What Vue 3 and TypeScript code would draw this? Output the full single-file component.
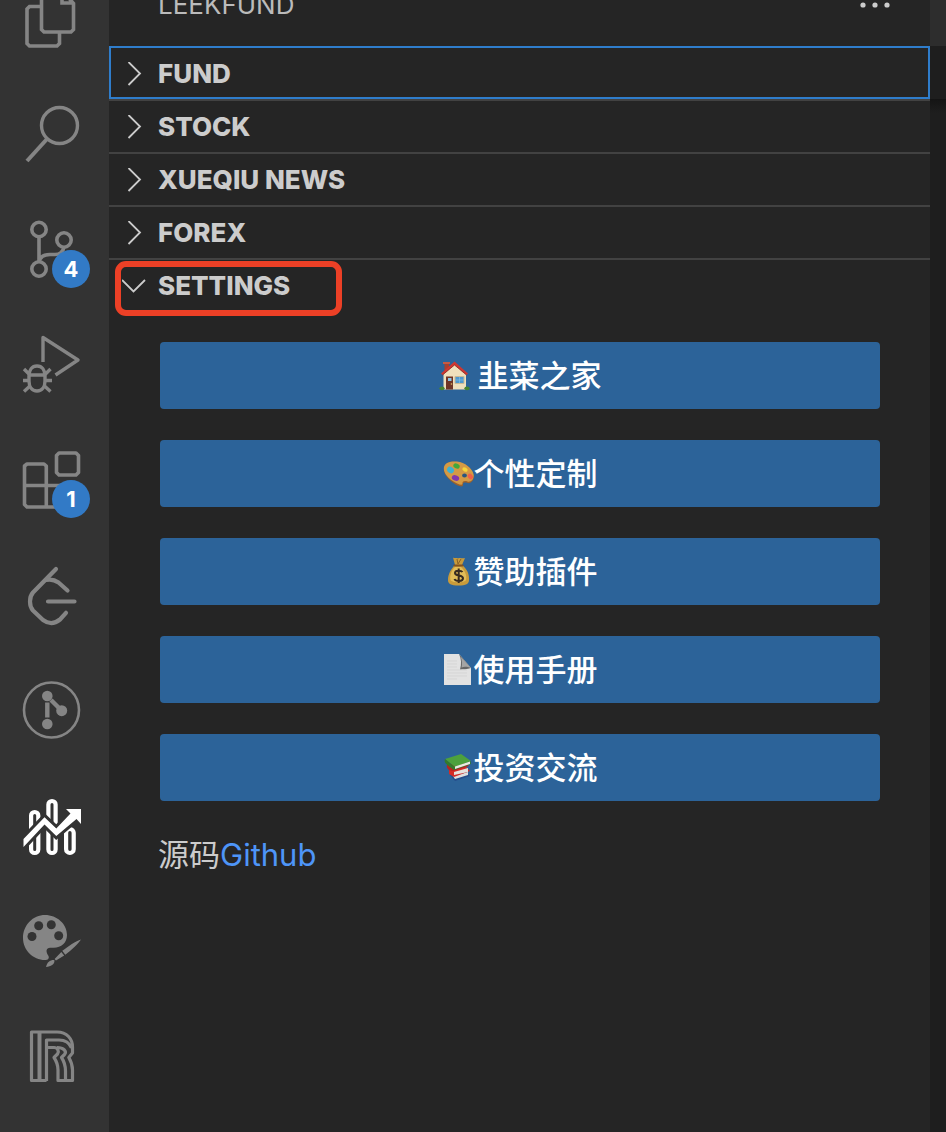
<script setup lang="ts">
import { ref } from 'vue'

interface Section {
  id: string
  title: string
  open: boolean
}

interface Action {
  icon: 'house' | 'palette' | 'money' | 'page' | 'books'
  label: string
  spaced?: boolean
}

const sections = ref<Section[]>([
  { id: 'fund', title: 'FUND', open: false },
  { id: 'stock', title: 'STOCK', open: false },
  { id: 'news', title: 'XUEQIU NEWS', open: false },
  { id: 'forex', title: 'FOREX', open: false },
  { id: 'settings', title: 'SETTINGS', open: true },
])

const focused = ref('fund')

const actions: Action[] = [
  { icon: 'house', label: '韭菜之家', spaced: true },
  { icon: 'palette', label: '个性定制' },
  { icon: 'money', label: '赞助插件' },
  { icon: 'page', label: '使用手册' },
  { icon: 'books', label: '投资交流' },
]

function toggle(section: Section) {
  section.open = !section.open
  focused.value = section.id
}
</script>

<template>
  <div class="workbench">
    <nav class="activity-bar" aria-label="Activity bar">
      <button class="activity" type="button" aria-label="Explorer">
        <svg viewBox="0 -37 109 115" fill="none" stroke="currentColor" stroke-width="3.6">
          <path d="M41.500-20V29.500L44 32H71L73.500 29.500V3.500L62-10M62-10V3H74" />
          <path d="M41.500 6.500H29.500L27 9V43.500L29.500 46H57L59.500 43.500V32" />
        </svg>
      </button>
      <button class="activity" type="button" aria-label="Search">
        <svg viewBox="0 78 109 115" fill="none" stroke="currentColor" stroke-width="3.4">
          <circle cx="59.500" cy="125.500" r="18" />
          <path d="M47 139L27 161" stroke-width="4" />
        </svg>
      </button>
      <button class="activity" type="button" aria-label="Source control">
        <svg viewBox="0 193 109 115" fill="none" stroke="currentColor" stroke-width="3.6">
          <circle cx="39" cy="229.500" r="7.200" />
          <circle cx="64" cy="240" r="7.200" />
          <circle cx="39" cy="269" r="7.200" />
          <path d="M39 237V262M64 247C63 252 60 254.500 55 254.500H50C44 254.500 40 257 39 262" />
        </svg>
        <span class="badge">4</span>
      </button>
      <button class="activity" type="button" aria-label="Run and debug">
        <svg viewBox="0 308 109 115" fill="none" stroke="currentColor" stroke-width="3.4">
          <path d="M43 362V337.500L78 360L55.500 375" stroke-linejoin="round" />
          <path d="M37 366C32 366 29 370 29 376V381C29 387 32 391 37 391S45 387 45 381V376C45 370 42 366 37 366Z" />
          <path d="M29 375H45M23 380.500H29M45 380.500H52M24 369L29.500 374.500M50.500 369L45 374.500M24 391.500L30 386M50.500 391.500L44.500 386" />
        </svg>
      </button>
      <button class="activity" type="button" aria-label="Extensions">
        <svg viewBox="0 423 109 115" fill="none" stroke="currentColor" stroke-width="3.6" stroke-linejoin="round">
          <path d="M59 453H76L78.500 455.500V472.500L76 475H59L56.500 472.500V455.500Z" />
          <path d="M46.300 507V466L44 464H27L24.500 466V504.500L27 507H64M24.500 485.500H66" />
        </svg>
        <span class="badge">1</span>
      </button>
      <button class="activity" type="button" aria-label="LeetCode">
        <svg viewBox="0 538 109 115" fill="none" stroke="currentColor" stroke-width="4.2" stroke-linecap="round" stroke-linejoin="round">
          <path d="M56 569L33 592.500C29 597 29 606 33 610.500L43 620C48.500 624 54.500 624 60 619.500L66 612.800" />
          <path d="M46 580C50 579 55 580 58.500 582.500L67.500 590.500M48 601.500H74.500" />
        </svg>
      </button>
      <button class="activity" type="button" aria-label="GitLens">
        <svg viewBox="0 653 109 115" fill="currentColor">
          <circle cx="51.500" cy="710" r="27.500" fill="none" stroke="currentColor" stroke-width="2.600" />
          <path d="M47.300 702.500V717.500M51 700L58.500 707.500" stroke="currentColor" stroke-width="4.4" />
          <circle cx="47.300" cy="696" r="5.300" />
          <circle cx="61.700" cy="710.700" r="5.500" />
          <circle cx="47.300" cy="724" r="5.300" />
        </svg>
      </button>
      <button class="activity active" type="button" aria-label="LeekFund">
        <svg viewBox="0 768 109 115" fill="none">
          <g stroke="currentColor" stroke-width="4.200">
            <rect x="31.100" y="812" width="7.200" height="41" rx="3.600" />
            <rect x="48.400" y="801" width="7.200" height="52" rx="3.600" />
            <rect x="66.100" y="829" width="7.600" height="24" rx="3.800" />
          </g>
          <path class="trend" d="M23.500 839L44.500 817.300L56.300 828.500L70.500 813.500L66 809H81V824L76.500 819L56.300 836L44.500 824.500L23.500 847Z" />
        </svg>
      </button>
      <button class="activity" type="button" aria-label="Theme colours">
        <svg viewBox="0 883 109 115" fill="currentColor">
          <path d="M45 915C33 915 23 925 23 938C23 950 33 960 45 960C48 960 49.500 958.500 48.500 956C46.500 953 46 951 47 949.300C48 947.700 50 947.600 53 947.700C61 948 67 943 67 935C67 924 57 915 45 915Z" />
          <g class="well">
            <circle cx="32" cy="936.500" r="4.500" />
            <circle cx="38.700" cy="925.700" r="4.500" />
            <circle cx="51.300" cy="924.700" r="4.500" />
            <circle cx="58.700" cy="935.700" r="4.500" />
          </g>
          <path d="M81 939.500C76 941 68 946.500 62.300 950.800L65.300 954.800C71 950.500 78 944 81 939.500ZM61.300 952L64.200 955.500L56 960.500L54.600 959ZM54 960C49.500 960 47.500 962 46 967C51 966.500 54.500 964.500 54.500 960.500Z" />
        </svg>
      </button>
      <button class="activity" type="button" aria-label="R tools">
        <svg viewBox="0 998 109 115" fill="none" stroke="currentColor" stroke-width="3.200" stroke-linejoin="round">
          <path d="M46.500 1080.500H31.500V1032H57C67 1032 72.500 1039 72.500 1047V1053L68.800 1057.500C71.500 1062 72.500 1066 72.500 1070V1080.500H58V1070C58 1066 57 1062 54 1057.500L57.500 1054C59.500 1051 57.500 1047.500 54 1047.500H46.500" />
          <path d="M46.500 1081V1040H59C65 1040 69.500 1043 71.500 1048M57 1047.500C64 1047.500 67 1051.500 64.500 1054.500L61.500 1057.500C64.500 1062 65.500 1066 65.500 1071V1080" />
          <path d="M39.500 1032V1080" stroke-width="4" />
        </svg>
      </button>
    </nav>

    <aside class="sidebar">
      <header class="title-bar">
        <h1>LEEKFUND</h1>
        <button class="more" type="button" aria-label="More actions">
          <svg viewBox="0 0 30 6" fill="currentColor">
            <circle cx="3" cy="3" r="2.600" />
            <circle cx="15" cy="3" r="2.600" />
            <circle cx="27" cy="3" r="2.600" />
          </svg>
        </button>
      </header>

      <section v-for="section in sections" :key="section.id" class="pane">
        <button
          type="button"
          class="pane-header"
          :class="{ focused: focused === section.id }"
          :aria-expanded="section.open"
          @click="toggle(section)"
        >
          <svg class="chevron" viewBox="0 0 24 24" fill="none" stroke="currentColor" stroke-width="1.800">
            <path v-if="section.open" d="M0 6L11.500 17.500L23 6" />
            <path v-else d="M6.500 0L18 11.500L6.500 23" />
          </svg>
          <span>{{ section.title }}</span>
          <span v-if="section.id === 'settings'" class="marker" aria-hidden="true"></span>
        </button>

        <div v-if="section.id === 'settings' && section.open" class="pane-body">
          <button v-for="action in actions" :key="action.label" class="action" :class="{ spaced: action.spaced }" type="button">
            <svg v-if="action.icon === 'house'" class="emoji" viewBox="0 0 31 31" aria-hidden="true">
              <path d="M5.500 2H10V10L5.500 14Z" fill="#a8402f" />
              <path d="M4 2H11V4H4Z" fill="#c55a44" />
              <path d="M4.500 14L15.500 4L27 14V29.500H4.500Z" fill="#efe0bd" />
              <path d="M15.500 1.500L29 13.500L27.500 15L15.500 5L3.500 15L2 13.500Z" fill="#cf3731" />
              <path d="M3.500 15L15.500 5L27.500 15" fill="none" stroke="#8d221d" stroke-width=".8" />
              <path d="M7 16.500H14V29.500H7Z" fill="#6f3526" />
              <path d="M9 18H12.500V21H9Z" fill="#8ac5e8" />
              <circle cx="12.500" cy="24" r=".8" fill="#e6c263" />
              <path d="M16 16.500H25V23.500H16Z" fill="#4d99cf" stroke="#c9b995" stroke-width="1" />
              <path d="M20.500 17V23M16.500 20H24.500" stroke="#85bde2" stroke-width=".7" />
              <ellipse cx="3" cy="28.300" rx="2.600" ry="1.900" fill="#458432" />
              <ellipse cx="28" cy="28.300" rx="2.600" ry="1.900" fill="#458432" />
            </svg>
            <svg v-else-if="action.icon === 'palette'" class="emoji" viewBox="0 0 31 31" aria-hidden="true">
              <path d="M1 10C2 4.500 8 3 14 4C22 5 29 10 30.500 17C31.500 22 28 26 24.500 25C21.500 24 19.500 24.500 20 27C20 30 14 28 9 24C4 20 0 15 1 10Z" fill="#9a612c" />
              <path d="M1 9C2 4 8 3 14 3.500C22 4.500 29 10 30.500 16C31.500 21 28 24.500 24.500 23.500C21.500 22.500 19 23 19.500 26C19 28 14 26 9 22.500C4 19 0 14 1 9Z" fill="#d49a45" />
              <ellipse cx="21.500" cy="17.500" rx="2.400" ry="2" fill="#2a557f" />
              <ellipse cx="13.500" cy="8" rx="3.300" ry="2.400" fill="#41a83b" transform="rotate(20 13.500 8)" />
              <ellipse cx="7.500" cy="12" rx="3.700" ry="2.900" fill="#3eb1d1" transform="rotate(35 7.500 12)" />
              <ellipse cx="22" cy="11.500" rx="2.800" ry="2" fill="#f6d53b" transform="rotate(30 22 11.500)" />
              <ellipse cx="12.500" cy="20" rx="3.800" ry="2.700" fill="#8137ae" transform="rotate(20 12.500 20)" />
              <ellipse cx="27.300" cy="18.500" rx="2.300" ry="3" fill="#f05f48" transform="rotate(-40 27.300 18.500)" />
            </svg>
            <svg v-else-if="action.icon === 'money'" class="emoji" viewBox="0 0 31 31" aria-hidden="true">
              <path d="M10 1.500C12 3 13 1 15 2.500C17 1 19 3 22 2L19 9C24 13 26.500 18 26 24C26 28 23 29.500 15.500 29.500S5 28 5 24C5 18 8 13 12 9Z" fill="#c99b3b" />
              <path d="M12 11C8 15 6.500 20 7.500 24C8.500 27 22 27 23 24C24 19 22 15 18 11Z" fill="#e3bd58" />
              <path d="M11.500 9.500H19.500" stroke="#83531f" stroke-width="2.200" stroke-linecap="round" />
              <path d="M14 3L15 8L18 3" fill="none" stroke="#8a6127" stroke-width="1" />
              <path d="M19.500 16C18.500 14.500 12 13.500 12 17C12 20.500 20 18.500 20 22.300C20 26 12.500 25.500 11.500 23M15.700 12.500V27" fill="none" stroke="#382b20" stroke-width="2" />
            </svg>
            <svg v-else-if="action.icon === 'page'" class="emoji" viewBox="0 0 31 31" aria-hidden="true">
              <path d="M1 0H16L28 14V31H1Z" fill="#e2e2e2" />
              <path d="M16 0L28 14C24 15.500 20 15 17 15.500C18.500 10 18.500 5 16 0Z" fill="#666" />
              <path d="M17.500 2.500L28 14C24 12.500 21 12.500 18.500 13.500C19.500 10 19 6 17.500 2.500Z" fill="#a5a5a5" />
              <path d="M4 7H14M4 10H14M4 13H14M4 16H24M4 19H24M4 22H24M4 25H14" stroke="#d0d0d0" stroke-width=".7" />
            </svg>
            <svg v-else class="emoji" viewBox="0 0 31 31" aria-hidden="true">
              <path d="M7 23L23 20L27 24L12 29Z" fill="#244d8b" />
              <path d="M10 24L25 20V23L12 27Z" fill="#dedede" />
              <path d="M6 17L23 15L27 19L11 25L6 22Z" fill="#d42b26" />
              <path d="M11 20L25 16V20L11 23Z" fill="#e6e2de" />
              <path d="M4 13L20 10L26 14L10 19C6 19 3 16 4 13Z" fill="#b92320" />
              <path d="M2 7L18 2L28 9L12 15Z" fill="#4da13d" />
              <path d="M2 7C1 10 2 12 11 18L28 12L27.500 9L12 15Z" fill="#347a2c" />
              <path d="M12 14.500L27 9.500V12L12 17Z" fill="#e9e9e3" />
            </svg>
            <span>{{ action.label }}</span>
          </button>
          <p class="source">源码<a href="#github">Github</a></p>
        </div>
      </section>
    </aside>

    <main class="editor" aria-label="Editor">
      <div class="tabs"></div>
      <div class="breadcrumbs"></div>
      <div class="code"></div>
    </main>
  </div>
</template>

<style>
body {
  margin: 0;
  background: #252525;
}
</style>

<style scoped>
.workbench {
  display: grid;
  grid-template-columns: 109px 1fr 16px;
  min-height: 100vh;
  overflow: hidden;
  background: #252525;
  color: #cccccc;
  font-family: Inter, "Noto Sans CJK SC", sans-serif;
}

button {
  margin: 0;
  padding: 0;
  border: 0;
  background: none;
  color: inherit;
  font: inherit;
  cursor: pointer;
}

.activity-bar {
  display: flex;
  flex-direction: column;
  margin-top: -37px;
  background: #333333;
}

.activity {
  position: relative;
  height: 115px;
  color: #858585;
}

.activity.active {
  color: #ffffff;
}

.activity svg {
  display: block;
  width: 100%;
  height: 115px;
}

.trend {
  fill: currentColor;
  stroke: #333333;
  stroke-width: 6px;
  paint-order: stroke;
}

.well {
  fill: #333333;
}

.badge {
  position: absolute;
  right: 19px;
  bottom: 20px;
  width: 38px;
  height: 38px;
  border-radius: 50%;
  background: #327ac6;
  color: #ffffff;
  font-size: 22px;
  font-weight: 700;
  line-height: 38px;
  text-align: center;
}

.sidebar {
  min-width: 0;
}

.title-bar {
  display: flex;
  align-items: center;
  justify-content: space-between;
  height: 82px;
  margin-top: -36px;
  padding: 0 40px 0 49px;
}

h1 {
  margin: 0;
  color: #bbbbbb;
  font-size: 26px;
  font-weight: 400;
  line-height: 32px;
}

.more svg {
  display: block;
  width: 30px;
  height: 6px;
}

.pane-header {
  position: relative;
  display: flex;
  align-items: center;
  gap: 12px;
  box-sizing: border-box;
  width: 100%;
  height: 53px;
  padding-left: 13px;
  border-top: 2px solid #424242;
  font-size: 26px;
  font-weight: 800;
  line-height: 32px;
  text-align: left;
}

.pane:nth-of-type(1) .pane-header {
  border-top-color: transparent;
}

.pane-header.focused {
  outline: 2px solid #2f7dcb;
  outline-offset: -2px;
}

.chevron {
  width: 24px;
  height: 24px;
}

.marker {
  position: absolute;
  top: 1px;
  left: 6px;
  box-sizing: border-box;
  width: 227px;
  height: 55px;
  border: 6px solid #ec4026;
  border-radius: 11px;
}

.pane-body {
  display: grid;
  gap: 31px;
  padding: 31px 50px 31px 51px;
}

.action {
  display: flex;
  align-items: center;
  justify-content: center;
  height: 67px;
  border-radius: 4px;
  background: #2c6399;
  color: #ffffff;
  font-size: 31px;
  font-weight: 500;
  line-height: 45px;
}

.action.spaced {
  gap: 8px;
}

.emoji {
  width: 31px;
  height: 31px;
}

.source {
  margin: 0 0 0 -2px;
  font-size: 31px;
  line-height: 45px;
}

.source a {
  color: #4e95f8;
  text-decoration: none;
}

.editor {
  display: flex;
  flex-direction: column;
}

.tabs {
  height: 46px;
  background: #2d2d2d;
}

.breadcrumbs {
  height: 53px;
  background: #1e1e1e;
}

.code {
  flex: 1;
  background: linear-gradient(#141414, #1e1e1e 14px);
}
</style>
